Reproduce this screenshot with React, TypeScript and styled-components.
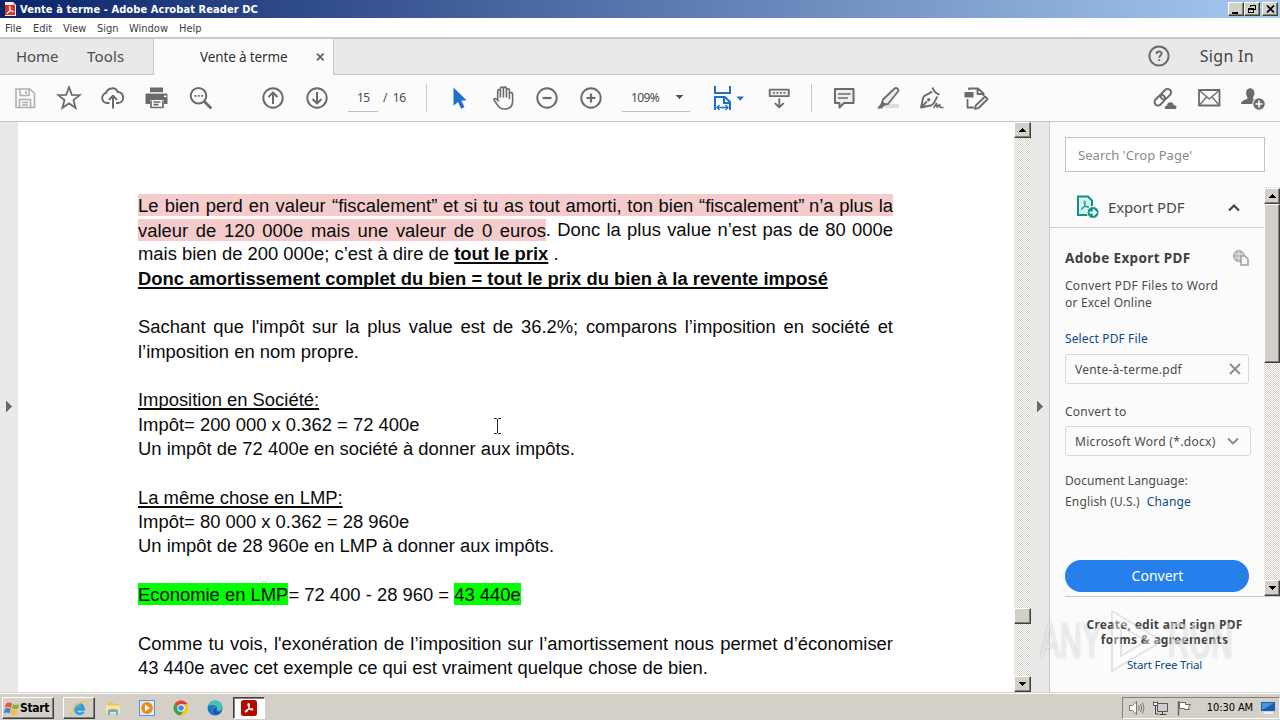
import React from "react";
import styled, { createGlobalStyle, css } from "styled-components";

const Global = createGlobalStyle`
  * { box-sizing: border-box; }
  html, body { margin: 0; padding: 0; }
  body { width: 1280px; height: 720px; overflow: hidden; background: #fbfbfb; }
`;

const ui = `"Noto Sans", "Open Sans", sans-serif`;
const sys = `"DejaVu Sans Condensed", "DejaVu Sans", sans-serif`;

const Window = styled.div`
  position: relative;
  width: 1280px;
  height: 720px;
  display: flex;
  flex-direction: column;
  overflow: hidden;
  font-family: ${ui};
  color: #4b4b4b;
  white-space: nowrap;
`;

/* Title bar */
const TitleBar = styled.header`
  height: 18px;
  flex: none;
  display: flex;
  align-items: center;
  padding: 0 2px 0 4px;
  background: linear-gradient(90deg, #0a246a, #a6caf0);
`;
const TitleText = styled.span<{ $ls: number }>`
  flex: 1;
  margin-left: 3px;
  color: #fff;
  font: bold 11px/17px ${sys};
  letter-spacing: ${(p) => p.$ls}px;
`;
const bevel = css`
  background: #d4d0c8;
  border: 1px solid;
  border-color: #fff #404040 #404040 #fff;
  box-shadow: inset -1px -1px 0 #808080;
`;
const CaptionButton = styled.span<{ $gap?: number }>`
  ${bevel}
  width: 16px;
  height: 14px;
  margin-left: ${(p) => p.$gap ?? 0}px;
  display: flex;
  align-items: center;
  justify-content: center;
`;

/* Menu */
const MenuBar = styled.nav`
  height: 19px;
  flex: none;
  display: flex;
  padding-left: 5px;
  background: #fff;
  color: #3c3c3c;
  font: 11px/21px ${sys};
`;
const MenuItem = styled.span<{ $w: number }>`
  width: ${(p) => p.$w}px;
`;

/* Tabs */
const TabBar = styled.div`
  height: 38px;
  flex: none;
  display: flex;
  background: #e9e9e9;
  border-top: 2px solid #c9c9c9;
`;
const Tab = styled.div<{ $w: number; $pad: number; $ls: number }>`
  width: ${(p) => p.$w}px;
  padding-left: ${(p) => p.$pad}px;
  border-bottom: 1px solid #c6c6c6;
  font-size: 15px;
  line-height: 35px;
  letter-spacing: ${(p) => p.$ls}px;
`;
const ActiveTab = styled.div`
  width: 181px;
  display: flex;
  align-items: center;
  padding: 0 8px 0 46px;
  background: #fbfbfb;
  border: solid #c6c6c6;
  border-width: 0 1px;
  color: #2f2f2f;
  font-size: 13.5px;
  letter-spacing: -0.13px;
  justify-content: space-between;
`;
const TabRest = styled.div`
  flex: 1;
  display: flex;
  align-items: center;
  justify-content: flex-end;
  padding: 0 26px 1px 0;
  border-bottom: 1px solid #c6c6c6;
`;
const SignIn = styled.span`
  margin-left: 30px;
  font-size: 16px;
  letter-spacing: 0.3px;
  color: #444;
`;

/* Toolbar */
const Toolbar = styled.div`
  height: 47px;
  flex: none;
  display: flex;
  align-items: center;
  padding: 0 5px 1px 3px;
  background: #fbfbfb;
  border-bottom: 1px solid #c6c6c6;
`;
const Slot = styled.span<{ $w?: number }>`
  width: ${(p) => p.$w ?? 44}px;
  display: flex;
  align-items: center;
  justify-content: center;
`;
const Gap = styled.span<{ $w?: number }>`
  ${(p) => (p.$w ? `width: ${p.$w}px;` : "flex: 1;")}
`;
const Divider = styled.span`
  width: 1px;
  height: 28px;
  background: #c6c6c6;
`;
const Field = styled.span<{ $w: number; $pad: number }>`
  width: ${(p) => p.$w}px;
  height: 28px;
  padding: 0 ${(p) => p.$pad - 2}px 0 ${(p) => p.$pad}px;
  display: flex;
  align-items: center;
  justify-content: space-between;
  border-bottom: 1px solid #c0c0c0;
  font-size: 12px;
  letter-spacing: -0.6px;
`;
const PageTotal = styled.span`
  width: 42px;
  padding-left: 5px;
  font-size: 12px;
  letter-spacing: -0.4px;
  word-spacing: 3px;
`;

/* Body */
const Body = styled.div`
  height: 570px;
  flex: none;
  display: flex;
  background: #fff;
`;
const Rail = styled.div`
  width: 18px;
  flex: none;
  display: flex;
  align-items: center;
  justify-content: center;
  padding-bottom: 2px;
  background: #e9e9e9;
`;
const Page = styled.main`
  width: 996px;
  flex: none;
  padding: 71.7px 0 0 120px;
  background: #fff;
  color: #0b0b0b;
  font-family: "Liberation Sans", Arial, sans-serif;
  font-size: 18.41px;
`;
const Line = styled.p<{ $justify?: boolean }>`
  margin: 0;
  width: 755px;
  height: 24.34px;
  line-height: 24.34px;
  ${(p) => p.$justify && "text-align: justify; text-align-last: justify;"}
`;
const Spaced = styled.span<{ $ws: number }>`
  word-spacing: ${(p) => p.$ws}px;
`;
const Under = styled.span<{ $bold?: boolean }>`
  font-weight: ${(p) => (p.$bold ? 700 : 400)};
  text-decoration: underline;
  text-decoration-thickness: ${(p) => (p.$bold ? 2 : 1.5)}px;
  text-underline-offset: 2px;
  text-decoration-skip-ink: none;
`;
const Mark = styled.mark<{ $c: string }>`
  background: ${(p) => p.$c};
  color: inherit;
  padding: 0.5px 0;
`;

const Scroll = styled.div<{ $w: number; $top?: number }>`
  width: ${(p) => p.$w}px;
  padding-top: ${(p) => p.$top ?? 0}px;
  flex: none;
  display: flex;
  flex-direction: column;
  background: repeating-conic-gradient(#fff 0 25%, #d4d0c8 0 50%) 0 0 / 2px 2px;
`;
const ScrollButton = styled.span`
  ${bevel}
  height: 16px;
  flex: none;
  display: flex;
  align-items: center;
  justify-content: center;
`;
const Thumb = styled.span<{ $top: number; $h: number }>`
  ${bevel}
  height: ${(p) => p.$h}px;
  margin-top: ${(p) => p.$top}px;
`;

/* Side panel */
const Panel = styled.aside`
  flex: 1;
  min-width: 0;
  display: flex;
  flex-direction: column;
  background: #fbfbfb;
  border-left: 1px solid #c6c6c6;
`;
const Search = styled.div`
  width: 200px;
  height: 35px;
  margin: 15px 0 15px 15px;
  padding-left: 12px;
  border: 1px solid #c4c4c4;
  background: #fff;
  color: #8a8a8a;
  font-size: 13px;
  line-height: 34px;
  letter-spacing: 0.05px;
`;
const PanelScroll = styled.div`
  height: 409px;
  display: flex;
`;
const PanelContent = styled.div`
  flex: 1;
  min-width: 0;
`;
const ToolHeader = styled.div`
  height: 41px;
  display: flex;
  align-items: center;
  padding: 0 23px 0 25px;
  border-bottom: 1px solid #d0d0d0;
`;
const ToolName = styled.span`
  flex: 1;
  margin-left: 7px;
  font-size: 15px;
  letter-spacing: -0.15px;
`;
const Section = styled.div`
  padding: 20px 13px 0 15px;
  font-size: 12px;
  line-height: 17px;
`;
const Row = styled.div<{ $mt?: number; $ls?: number }>`
  display: flex;
  align-items: center;
  margin-top: ${(p) => p.$mt ?? 0}px;
  letter-spacing: ${(p) => p.$ls ?? 0}px;
`;
const Heading = styled.strong`
  flex: 1;
  font-size: 13.5px;
  line-height: 20px;
  color: #404040;
  letter-spacing: 0.35px;
`;
const Link = styled.span<{ $ml?: number }>`
  color: #0c4a8c;
  margin-left: ${(p) => p.$ml ?? 0}px;
`;
const Box = styled.div<{ $mt: number; $w: number; $ls?: number }>`
  width: ${(p) => p.$w}px;
  height: 30px;
  margin-top: ${(p) => p.$mt}px;
  padding: 0 7px 0 9px;
  display: flex;
  align-items: center;
  justify-content: space-between;
  border: 1px solid #d8d8d8;
  border-radius: 3px;
  letter-spacing: ${(p) => p.$ls ?? 0}px;
`;
const ConvertButton = styled.div`
  width: 184px;
  height: 32px;
  margin: 50px 0 0 0;
  padding-left: 1px;
  border-radius: 16px;
  background: #2680eb;
  color: #fff;
  text-align: center;
  font-size: 14px;
  line-height: 32px;
`;
const Promo = styled.div`
  height: 96px;
  margin: 0 0 0 15px;
  padding: 20px 16px 0 0;
  border-top: 1px solid #c9c9c9;
  text-align: center;
  font-size: 12px;
  line-height: 15px;
  font-weight: 700;
  letter-spacing: 0.27px;
  color: #454545;
`;
const Trial = styled.div`
  margin-top: 10px;
  font-weight: 400;
  font-size: 11.5px;
  letter-spacing: -0.2px;
  color: #0c4a8c;
`;

/* Task bar */
const TaskBar = styled.footer`
  height: 28px;
  flex: none;
  display: flex;
  align-items: center;
  padding: 2px 0 0 2px;
  background: #d4d0c8;
  border-top: 1px solid #d4d0c8;
  box-shadow: inset 0 1px 0 #fff;
`;
const StartButton = styled.div`
  ${bevel}
  width: 52px;
  height: 22px;
  display: flex;
  align-items: center;
  padding-left: 1px;
  color: #000;
  font: bold 12px/20px ${sys};
  letter-spacing: -0.35px;
`;
const TaskButton = styled.div<{ $w: number; $ml: number; $kind?: "up" | "down" }>`
  width: ${(p) => p.$w}px;
  height: 22px;
  margin-left: ${(p) => p.$ml}px;
  display: flex;
  align-items: center;
  justify-content: center;
  ${(p) => p.$kind === "up" && bevel}
  ${(p) =>
    p.$kind === "down" &&
    css`
      background: #fff;
      border: 1px solid;
      border-color: #404040 #fff #fff #404040;
      box-shadow: inset 1px 1px 0 #808080;
    `}
`;
const Tray = styled.div`
  width: 158px;
  height: 22px;
  display: flex;
  align-items: center;
  padding: 0 3px 0 4px;
  border: 1px solid;
  border-color: #808080 #fff #fff #808080;
  color: #000;
  font: 11px/20px ${sys};
  gap: 7px;
`;
const Clock = styled.span`
  flex: 1;
  text-align: right;
  padding-right: 1px;
  letter-spacing: -0.1px;
`;

/* Overlays */
const TextCursor = styled.svg`
  position: absolute;
  left: 492px;
  top: 417px;
`;
const Watermark = styled.div`
  position: absolute;
  left: 1040px;
  top: 606px;
  width: 196px;
  height: 70px;
  display: flex;
  align-items: center;
`;
const WatermarkWord = styled.span<{ $w: number }>`
  display: block;
  width: ${(p) => p.$w}px;
  color: rgba(255, 255, 255, 0.55);
  font: 400 50px/70px "Liberation Sans", sans-serif;
  text-shadow: 0 0 3px rgba(0, 0, 0, 0.2);
  transform: scaleX(0.6);
  transform-origin: 0 50%;
`;

const Icon = ({ children, s = 28, w = 2 }: { children: React.ReactNode; s?: number; w?: number }) => (
  <svg width={s} height={s} viewBox={`0 0 ${s} ${s}`} fill="none" stroke="#6b6b6b" strokeWidth={w} strokeLinejoin="round">
    {children}
  </svg>
);

const Arrow = ({ d, c = "#000", w = 7, h = 4 }: { d: string; c?: string; w?: number; h?: number }) => (
  <svg width={w} height={h} viewBox={`0 0 ${w} ${h}`} shapeRendering="crispEdges">
    <path d={d} fill={c} />
  </svg>
);
const UP = "M3 0h1v1h1v1h1v1h1v1H0V3h1V2h1V1h1z";
const DOWN = "M0 0h7v1H6v1H5v1H4v1H3V3H2V2H1V1H0z";

const AcroMark = "M6 2.6c1.3 0 1.1 2.2.2 4.3-.8 1.900-2 4-3 4.100-1-.2.300-1.900 2.600-2.700 2-.7 4.500-.8 4.500.2 0 1.100-2.300.3-3.500-1.300C5.700 5.500 5 2.700 6 2.600z";

export default function App() {
  return (
    <Window>
      <Global />
      <TitleBar>
        <svg width="13" height="14" viewBox="0 0 13 14">
          <path d="M1 0h8l3 3v11H1z" fill="#f4eeee" />
          <path d="M9 0v3h3z" fill="#bbb" />
          <rect x="1" y="3" width="10" height="10" fill="#d9302a" />
          <path d={AcroMark} transform="translate(0.400 2) scale(0.880)" fill="none" stroke="#fff" strokeWidth="1.100" />
        </svg>
        <TitleText $ls={0.08}>Vente à terme - Adobe Acrobat Reader DC</TitleText>
        <CaptionButton>
          <svg width="10" height="9"><rect x="1" y="7" width="6" height="2" fill="#000" /></svg>
        </CaptionButton>
        <CaptionButton>
          <svg width="10" height="10" shapeRendering="crispEdges" fill="none" stroke="#000">
            <path d="M3.500 3V1.500h5v4H7M3 1.500h6" /><path d="M1.500 4.500h5v4h-5zM1 5h6" />
          </svg>
        </CaptionButton>
        <CaptionButton $gap={2}>
          <svg width="9" height="8"><path d="M1 .5l7 7M8 .5l-7 7" stroke="#000" strokeWidth="1.700" /></svg>
        </CaptionButton>
      </TitleBar>

      <MenuBar>
        <MenuItem $w={28}>File</MenuItem>
        <MenuItem $w={30}>Edit</MenuItem>
        <MenuItem $w={34}>View</MenuItem>
        <MenuItem $w={32}>Sign</MenuItem>
        <MenuItem $w={50}>Window</MenuItem>
        <MenuItem $w={30}>Help</MenuItem>
      </MenuBar>

      <TabBar>
        <Tab $w={87} $pad={16} $ls={-0.05}>Home</Tab>
        <Tab $w={66} $pad={0} $ls={0.2}>Tools</Tab>
        <ActiveTab>
          Vente à terme
          <svg width="9" height="8"><path d="M1 .7l6.600 6.600M7.600.7L1 7.300" stroke="#666" strokeWidth="1.900" /></svg>
        </ActiveTab>
        <TabRest>
          <Icon s={22}>
            <circle cx="11" cy="11" r="9.600" />
            <path d="M8.500 9c0-3.500 5.200-3.200 5.200-.4 0 1.900-2.500 1.900-2.500 4.100M11.200 14.300v1.800" strokeWidth="1.900" strokeLinejoin="miter" />
          </Icon>
          <SignIn>Sign In</SignIn>
        </TabRest>
      </TabBar>

      <Toolbar>
        <Slot>
          <svg width="28" height="28" fill="none" stroke="#b0b0b0" strokeWidth="1.600">
            <path d="M5 5h14l4.500 4.500V23.500H5zM9 5v6.500h9V5M8.500 23.500v-8h11v8M15 6.500v3.500M11 18.500h6M11 21h6" />
          </svg>
        </Slot>
        <Slot>
          <Icon w={1.8}><path d="M14 3.300l2.800 7.500 7.900.3-6.200 5 2.100 7.700-6.600-4.400-6.600 4.400 2.100-7.700-6.200-5 7.900-.3z" strokeLinejoin="miter" /></Icon>
        </Slot>
        <Slot>
          <Icon><path d="M10.500 19H8a5 5 0 01-.8-9.900C8 3.500 16.500 2.500 18.800 8c7 .2 7.200 10.500.2 11h-2M14 24.500V12M10 15.700l4-4 4 4" /></Icon>
        </Slot>
        <Slot $w={42}>
          <Icon>
            <path d="M8 3.500h13v5H8z" fill="#6b6b6b" stroke="none" />
            <path d="M4.500 9.500h20a1 1 0 011 1V20H22v-4H8v4H3.500v-9.500a1 1 0 011-1z" fill="#6b6b6b" stroke="none" />
            <path d="M9 16.500v7h12v-7M11.500 18h7M11.500 20.700h5" strokeWidth="1.700" />
            <path d="M22 12.300h2.500" stroke="#fff" strokeWidth="1.500" />
            <path d="M8.500 8.800h12" stroke="#fbfbfb" strokeWidth=".9" />
          </Icon>
        </Slot>
        <Slot $w={46}>
          <Icon>
            <circle cx="12.500" cy="11.800" r="7.800" /><path d="M18.300 17.600l7 7" strokeWidth="2.800" />
            <path d="M8.500 11.800H17" strokeWidth="1.800" strokeDasharray="1.900 1.400" />
          </Icon>
        </Slot>
        <Gap $w={28} />
        <Slot><Icon><circle cx="14" cy="14" r="9.700" /><path d="M14 20V8.800M9.500 13L14 8.500l4.500 4.500" /></Icon></Slot>
        <Slot><Icon><circle cx="14" cy="14" r="9.700" /><path d="M14 8v11.200M9.500 15l4.500 4.500 4.500-4.500" /></Icon></Slot>
        <Gap $w={9} />
        <Field $w={30} $pad={9}>15</Field>
        <PageTotal>/ 16</PageTotal>
        <Gap $w={6} />
        <Divider />
        <Gap $w={10} />
        <Slot>
          <svg width="28" height="28"><path d="M8.500 3.500v18.200l4.500-3.600 3.200 6.600 3.300-1.600-3.200-6.300 5.200-.6z" fill="#1f6fd0" /></svg>
        </Slot>
        <Slot>
          <Icon w={1.6}>
            <path d="M8.700 16.500V7c0-2 2.700-2 2.700 0v6V4.600c0-2 3-2 3 0V13V4.600c0-2 3-2 3 0V13V6.200c0-2 3-2 3 0V14.500V10c0-2 3.200-2 3.200 0v7c0 5-3 8-8 8-4 0-6-1.700-7.600-4.700-1.400-2.500-3.200-4-3-5 .8-1.600 3.200-.3 4.700 2.200" />
          </Icon>
        </Slot>
        <Slot><Icon><circle cx="14" cy="14" r="9.700" /><path d="M9.500 14h9" strokeWidth="2.200" /></Icon></Slot>
        <Slot><Icon><circle cx="14" cy="14" r="9.700" /><path d="M9.500 14h9M14 9.500v9" strokeWidth="2.200" /></Icon></Slot>
        <Gap $w={9} />
        <Field $w={68} $pad={9}>109%<Arrow d={DOWN} c="#555" /></Field>
        <Gap $w={17} />
        <Slot $w={38}>
          <svg width="38" height="28" fill="none" stroke="#1f6fc4" strokeWidth="2">
            <path d="M8 2v7h15V2M8 26V13h10l5 5v8M17 13v6h6" />
            <path d="M10 23.500h11M12.500 21L10 23.500l2.500 2.500M18.500 21l2.500 2.500-2.500 2.500" strokeWidth="1.300" />
            <path d="M29.500 12.500h7.500l-3.750 4.200z" fill="#1f6fc4" stroke="none" />
          </svg>
        </Slot>
        <Gap $w={21} />
        <Slot $w={26}>
          <Icon>
            <path d="M4 5h20.500v7H4z" fill="#eee" /><path d="M7.500 8.500h14" strokeWidth="1.700" strokeDasharray="2 1.800" />
            <path d="M14.300 14.500v9M9.500 19.500l4.800 4.500 4.800-4.500" />
          </Icon>
        </Slot>
        <Gap $w={19} />
        <Divider />
        <Gap $w={10} />
        <Slot>
          <Icon><path d="M5 5h18.500v14H14l-4.500 4.500V19H5z" fill="#eee" /><path d="M8 10h12.500M8 14h10" strokeWidth="1.500" /></Icon>
        </Slot>
        <Slot>
          <Icon w={1.8}>
            <path d="M13 20h12v4H10z" fill="#ddd" stroke="none" />
            <path d="M9 15.500L20.500 4.500c2-1.500 5 1 3.500 3L14 20l-4 .5-2-2z" fill="#eee" />
            <path d="M8 17l-1.500 3L3 24.500h5l2-2.500 2.500-1.300z" fill="#6b6b6b" stroke="none" />
          </Icon>
        </Slot>
        <Slot>
          <Icon w={1.9}>
            <path d="M14.500 3.500c1 3.500 3.500 6 7 7M14 7.500c-3 3-7.500 2.500-8.800 6L3 23.500l10.500-2.300c3.500-1.200 3.300-5.500 6-8.700M3.500 23l5.500-5.500" />
            <circle cx="10.700" cy="15.800" r="1.700" fill="#6b6b6b" stroke="none" />
            <path d="M15.500 23.800l3-4.300.7 3.800 2.300-2.800.8 3h3.200" strokeWidth="1.600" />
          </Icon>
        </Slot>
        <Slot>
          <Icon w={1.800}>
            <path d="M7 6V4.500h9l5.500 5V12M15.500 4.500V10h6M5.500 15v8.500H12" />
            <path d="M2.500 8h9v5.500h-9z" fill="#6b6b6b" stroke="none" />
            <path d="M23 12.500l2.700 2.500-9 9-3.700 1 .8-3.700z" fill="#eee" />
          </Icon>
        </Slot>
        <Gap />
        <Slot>
          <Icon>
            <g transform="rotate(-45 12 13)"><rect x="1.500" y="9.500" width="12" height="7" rx="3.500" /><rect x="10" y="9.500" width="12" height="7" rx="3.500" /></g>
            <path d="M15 25.500c-2.500 0-2.500-4 .5-4 .5-5 7-4.500 7.500-.7 4 .2 3.700 4.700.5 4.700z" fill="#6b6b6b" stroke="#fbfbfb" strokeWidth="1" />
          </Icon>
        </Slot>
        <Slot>
          <Icon w={1.8}><path d="M4 6h20.500v15.500H4z" /><path d="M5 7l9.200 8L23.500 7M5 20.500l6.500-7.500M23.500 20.500L17 13" strokeWidth="1.300" /></Icon>
        </Slot>
        <Slot>
          <Icon>
            <path d="M7 9c0-6.500 8.500-6.500 8.500 0 0 3-1.500 3.500-1.500 5 0 2 4.500 1.500 5 6H2c0-4.500 6.500-4 6.500-6C8.500 12.500 7 12 7 9z" fill="#6b6b6b" stroke="none" />
            <circle cx="20" cy="20" r="6.300" fill="#6b6b6b" stroke="#fbfbfb" strokeWidth="1.100" />
            <path d="M16.500 20h7M20 16.500v7" stroke="#fff" strokeWidth="1.700" />
          </Icon>
        </Slot>
      </Toolbar>

      <Body>
        <Rail><Arrow d="M0 0L6 5.500L0 11z" c="#6b6b6b" w={6} h={11} /></Rail>
        <Page>
          <Line $justify>
            <Mark $c="#f4cccc">
              <Spaced $ws={0.6}>Le bien perd en valeur </Spaced>“fiscalement” et si tu as tout amorti, ton bien “fiscalement”<Spaced $ws={-1}> </Spaced>n’a plus la
            </Mark>
          </Line>
          <Line $justify><Mark $c="#f4cccc"><Spaced $ws={1.4}>valeur de 120 000e mais une valeur de 0 euros</Spaced></Mark>. Donc la plus value n’est pas de 80 000e</Line>
          <Line>mais bien de 200 000e; c’est à dire de <Under $bold>tout le prix</Under> .</Line>
          <Line><Under $bold>Donc amortissement complet du bien = tout le prix du bien à la revente imposé</Under></Line>
          <Line />
          <Line $justify>Sachant que l'impôt sur la plus value est de 36.2%; comparons l’imposition en société et</Line>
          <Line>l’imposition en nom propre.</Line>
          <Line />
          <Line><Under>Imposition en Société:</Under></Line>
          <Line>Impôt= 200 000 x 0.362 = 72 400e</Line>
          <Line>Un impôt de 72 400e en société à donner aux impôts.</Line>
          <Line />
          <Line><Under>La même chose en LMP:</Under></Line>
          <Line>Impôt= 80 000 x 0.362 = 28 960e</Line>
          <Line>Un impôt de 28 960e en LMP à donner aux impôts.</Line>
          <Line />
          <Line><Mark $c="#00ff00">Economie en LMP</Mark>= 72 400 - 28 960 = <Mark $c="#00ff00">43 440e</Mark></Line>
          <Line />
          <Line $justify>Comme tu vois, l'exonération de l’imposition sur l’amortissement nous permet d’économiser</Line>
          <Line>43 440e avec cet exemple ce qui est vraiment quelque chose de bien.</Line>
        </Page>
        <Scroll $w={17}>
          <ScrollButton><Arrow d={UP} /></ScrollButton>
          <Thumb $top={470} $h={16} />
          <Gap />
          <ScrollButton><Arrow d={DOWN} /></ScrollButton>
        </Scroll>
        <Rail><Arrow d="M0 0L6 5.500L0 11z" c="#6b6b6b" w={6} h={11} /></Rail>
        <Panel>
          <Search>Search 'Crop Page'</Search>
          <PanelScroll>
            <PanelContent>
              <ToolHeader>
                <svg width="26" height="26" fill="none">
                  <path d="M3 2.500h10l4 4V21H3z" fill="#d3f1ef" stroke="#12908a" strokeWidth="2" />
                  <path d={AcroMark} transform="translate(3.500 4.500)" stroke="#12908a" strokeWidth="1" />
                  <circle cx="18" cy="18.500" r="6" fill="#12908a" stroke="#fbfbfb" />
                  <path d="M14.500 18.500h6M18 15.500l3 3-3 3" stroke="#fff" strokeWidth="1.800" />
                </svg>
                <ToolName>Export PDF</ToolName>
                <svg width="14" height="9"><path d="M2 7.500l5-5 5 5" fill="none" stroke="#444" strokeWidth="2.200" /></svg>
              </ToolHeader>
              <Section>
                <Row>
                  <Heading>Adobe Export PDF</Heading>
                  <svg width="18" height="16" fill="none" stroke="#a0a0a0">
                    <circle cx="6" cy="6" r="5.500" fill="#b8b8b8" />
                    <path d="M1 4h10M1 8h10M6 1v10" stroke="#eee" strokeWidth=".8" />
                    <path d="M8 6h4l3 3v6H8z" fill="#fbfbfb" strokeWidth="1.500" />
                  </svg>
                </Row>
                <Row $mt={9} $ls={0.29}>Convert PDF Files to Word</Row>
                <Row $ls={0.2}>or Excel Online</Row>
                <Row $mt={19} $ls={0.12}><Link>Select PDF File</Link></Row>
                <Box $mt={7} $w={184} $ls={0.24}>
                  Vente-à-terme.pdf
                  <svg width="12" height="12"><path d="M1 1l10 10M11 1L1 11" stroke="#8a8a8a" strokeWidth="1.800" /></svg>
                </Box>
                <Row $mt={19} $ls={0.25}>Convert to</Row>
                <Box $mt={6} $w={186} $ls={0.31}>
                  Microsoft Word (*.docx)
                  <svg width="18" height="8"><path d="M3 1.500l5 5 5-5" fill="none" stroke="#8a8a8a" strokeWidth="1.900" /></svg>
                </Box>
                <Row $mt={16} $ls={0.08}>Document Language:</Row>
                <Row $mt={4} $ls={0.15}>English (U.S.)<Link $ml={7}>Change</Link></Row>
                <ConvertButton>Convert</ConvertButton>
              </Section>
            </PanelContent>
            <Scroll $w={16} $top={1}>
              <ScrollButton><Arrow d={UP} /></ScrollButton>
              <Thumb $top={0} $h={159} />
              <Gap />
              <ScrollButton><Arrow d={DOWN} /></ScrollButton>
            </Scroll>
          </PanelScroll>
          <Promo>
            Create, edit and sign PDF<br />forms &amp; agreements
            <Trial>Start Free Trial</Trial>
          </Promo>
        </Panel>
      </Body>

      <TaskBar>
        <StartButton>
          <svg width="16" height="16">
            <path d="M2 3.500c2-1.300 4-1.300 6 0L7 8C5 6.800 3 6.800 1 8z" fill="#e9592b" />
            <path d="M9 4c2 1.200 4 1.200 6 0l-1 4.500c-2 1-4 1-6 0z" fill="#7db52e" />
            <path d="M.8 9c2-1.200 4-1.200 6 0l-1.200 4.500c-2-1.200-4-1.200-6 0z" fill="#3f86d8" />
            <path d="M7.800 9.500c2 1.200 4 1.200 6 0L12.600 14c-2 1.200-4 1.200-6 0z" fill="#f6bd27" />
          </svg>
          Start
        </StartButton>
        <TaskButton $w={32} $ml={9} $kind="up">
          <svg width="18" height="18" fill="none">
            <path d="M15 10.500H5.500c0 5 6 5.500 8 2.500M5.500 8.500h7.500c0-4.500-7.500-4.500-7.500 2" stroke="#2f9fe0" strokeWidth="2.600" />
            <path d="M2 16C-.5 12 9 2 15.500 2.500c2 1 .5 3.500.5 3.500" stroke="#f3c63c" strokeWidth="1.300" />
          </svg>
        </TaskButton>
        <TaskButton $w={32} $ml={2}>
          <svg width="18" height="18">
            <path d="M3 3h6l1 2h5v9H3z" fill="#e9c75d" /><path d="M2 6.500h14V15H2z" fill="#f8e49a" />
            <path d="M4 16v-4.500c1-2 9-2 10 0V16h-2v-3H6v3z" fill="#61aede" />
          </svg>
        </TaskButton>
        <TaskButton $w={32} $ml={2}>
          <svg width="18" height="18">
            <rect x="1.500" y="1.500" width="15" height="15" fill="#dcecf8" stroke="#5796cf" />
            <circle cx="9" cy="9" r="5.900" fill="#f28a1a" /><path d="M7 5.500l5 3.500-5 3.500z" fill="#fff" />
          </svg>
        </TaskButton>
        <TaskButton $w={32} $ml={2}>
          <svg width="18" height="18">
            <circle cx="9" cy="9" r="7.500" fill="#f6c52c" />
            <path d="M9 9L2.500 5.300A7.500 7.500 0 0115.500 5.300H9z" fill="#df4232" />
            <path d="M9 9L2.500 5.200A7.500 7.500 0 008.500 16.500L12 11z" fill="#38a351" />
            <circle cx="9" cy="9" r="3.700" fill="#fff" /><circle cx="9" cy="9" r="2.800" fill="#4285f4" />
          </svg>
        </TaskButton>
        <TaskButton $w={32} $ml={2}>
          <svg width="18" height="18">
            <circle cx="9" cy="9" r="7.500" fill="#1c74c8" />
            <path d="M2 7C4-.5 16-.2 16.500 8c0 4-4.500 4.200-6 3 3-4-4-6.500-8.500-4z" fill="#45c3b0" />
            <path d="M10.500 8c-2 2-.5 5.500 5 4.500-2.500 3.500-9 3.500-9-1.500 0-2 2-3.500 4-3z" fill="#d4d0c8" />
            <path d="M10.300 10c0 2.500 3 3.300 5.700 2-3 5-9 4.500-9.500-.5 0-2 2-3.500 3.800-3.300z" fill="#155ea8" />
          </svg>
        </TaskButton>
        <TaskButton $w={32} $ml={2} $kind="down">
          <svg width="18" height="18">
            <rect x="1" y="1" width="16" height="16" rx="2.500" fill="#b30b00" />
            <path d={AcroMark} transform="translate(2.500 2)" fill="none" stroke="#fff" strokeWidth="1.200" />
          </svg>
        </TaskButton>
        <Gap />
        <Tray>
          <svg width="18" height="16" fill="none" stroke="#777">
            <path d="M2.500 5.500h3l4-4v13l-4-4h-3z" fill="#fff" /><path d="M11.500 5.500q1.500 2.500 0 5M13.500 4q2.500 4 0 8M15.500 2.500q3 5.500 0 11" />
          </svg>
          <svg width="16" height="16" fill="none" stroke="#555">
            <path d="M5.500 3.500h10v8h-10z" fill="#ccc" /><path d="M7.500 14.500h7M10.500 12v2M1.500 1.500v3.500h4V1.500M3.500 5v9h3" stroke="#444" /><path d="M1.500 2.500h4v3h-4z" fill="#fff" />
          </svg>
          <svg width="18" height="16" fill="none" stroke="#666">
            <path d="M3.500 1v14.500" strokeWidth="1.500" /><path d="M4.500 2.500h6v2h5l-2 3 1 2h-5v-1h-5z" fill="#fff" />
          </svg>
          <Clock>10:30 AM</Clock>
          <svg width="15" height="14"><path d="M0 1h14v9H0z" fill="#1c5fae" /><path d="M1 2h12L1 9z" fill="#4a94dd" /><path d="M3 11h9v2H2z" fill="#eee" /></svg>
        </Tray>
      </TaskBar>

      <TextCursor width="11" height="18" fill="none" stroke="#222">
        <path d="M2 1.500h2.500l1 1 1-1H9M5.500 2v14M2 16.500h2.500l1-1 1 1H9" />
      </TextCursor>
      <Watermark>
        <WatermarkWord $w={66}>ANY</WatermarkWord>
        <svg width="62" height="70" viewBox="0 0 62 70">
          <path d="M6 5v60l50-30zM15 20v30l25-15z" fill="#fff" fillOpacity=".4" fillRule="evenodd" stroke="#000" strokeOpacity=".1" strokeWidth="1.800" />
        </svg>
        <WatermarkWord $w={60}>RUN</WatermarkWord>
      </Watermark>
    </Window>
  );
}
